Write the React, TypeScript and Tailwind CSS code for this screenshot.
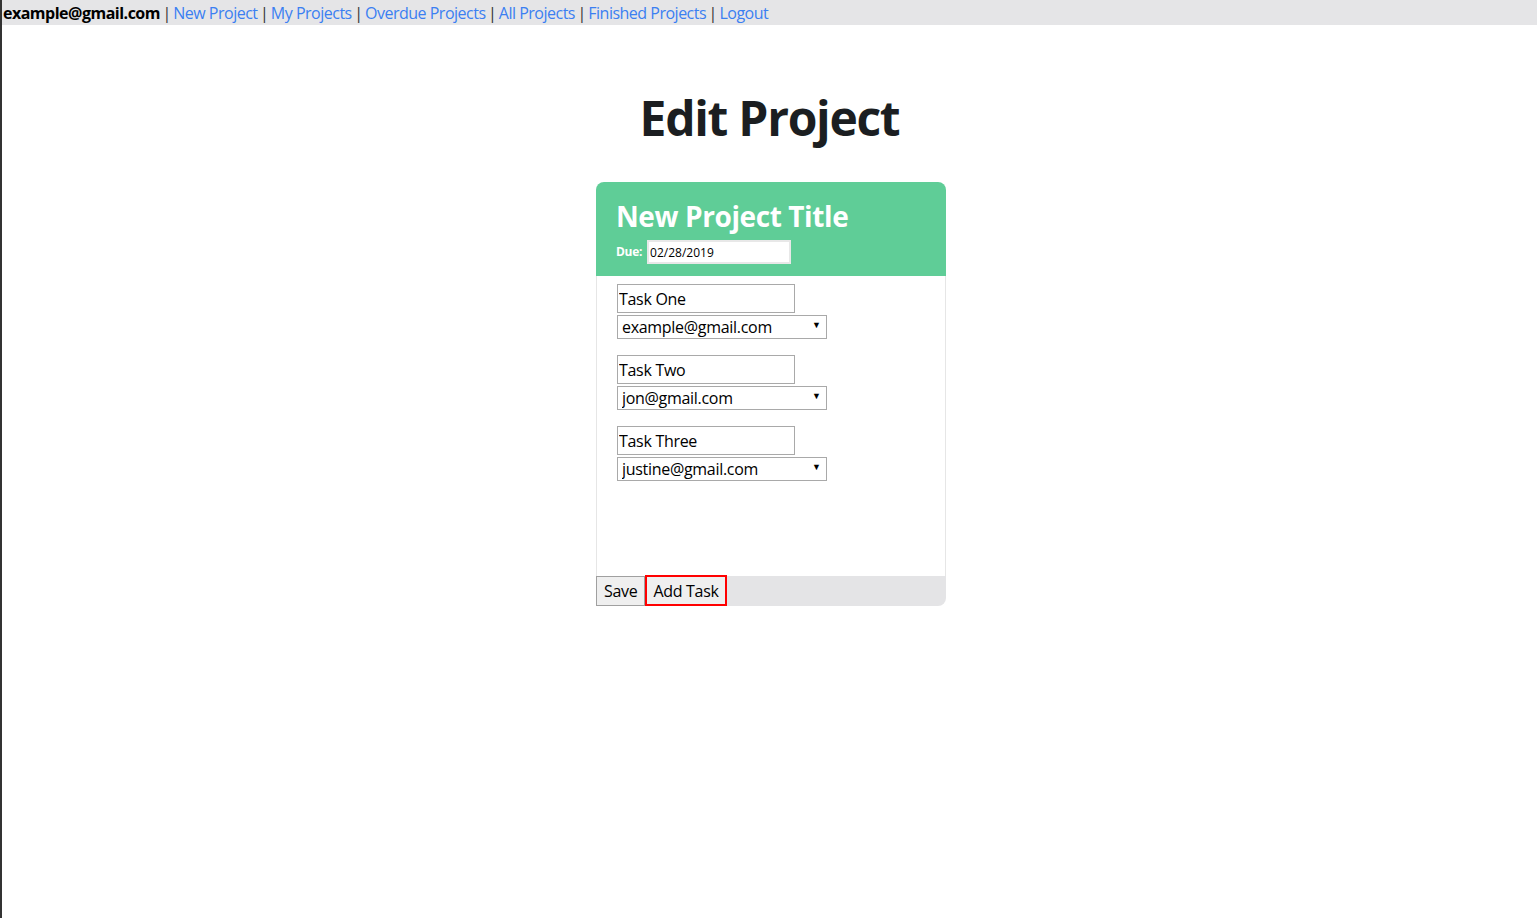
import { useState } from "react";

const links = ["New Project", "My Projects", "Overdue Projects", "All Projects", "Finished Projects", "Logout"];

const tasks = [
  { name: "Task One", user: "example@gmail.com" },
  { name: "Task Two", user: "jon@gmail.com" },
  { name: "Task Three", user: "justine@gmail.com" },
];

const users = ["example@gmail.com", "jon@gmail.com", "justine@gmail.com"];

function TaskRow({ name, user }: { name: string; user: string }) {
  const [value, setValue] = useState(user);
  return (
    <div className="flex flex-col gap-[2px]">
      <input
        defaultValue={name}
        className="w-[178px] h-[29px] border border-[#a9a9a9] px-[1px] text-[16px] tracking-[-0.3px] text-black outline-none"
      />
      <div className="relative w-[210px] h-[24px]">
        <select
          value={value}
          onChange={(e) => setValue(e.target.value)}
          className="appearance-none w-full h-full border border-[#a9a9a9] bg-white pl-[4px] text-[16px] tracking-[-0.3px] leading-[20px] text-black outline-none"
        >
          {users.map((u) => (
            <option key={u}>{u}</option>
          ))}
        </select>
        <span className="pointer-events-none absolute right-[6px] top-[3px] text-[9px] text-black">▼</span>
      </div>
    </div>
  );
}

export default function App() {
  return (
    <div className="min-h-[918px] border-l-2 border-[#333] bg-white font-['Open_Sans',sans-serif] text-[#212529]">
      <nav className="bg-[#e5e5e7] h-[25px] flex items-center text-[16px] leading-none pl-[1px]">
        <span className="font-bold text-black tracking-[-0.5px]">example@gmail.com</span>
        {links.map((l) => (
          <span key={l} className="tracking-[-0.5px]">
            <span className="text-[#333] mx-[2.5px]">|</span>
            <a href="#" className="text-[#3b7ff2]">{l}</a>
          </span>
        ))}
      </nav>

      <h1 className="text-center text-[48px] font-bold text-[#1b1e21] mt-[63px] leading-[60px] tracking-[-1.3px]">Edit Project</h1>

      <div className="mt-[34px] w-[350px] ml-[594px]">
        <div className="bg-[#5fcd97] rounded-t-[8px] h-[94px] px-[20px] pt-[16px]">
          <h2 className="text-white font-bold text-[28px] leading-[36px] tracking-[-0.4px]">New Project Title</h2>
          <div className="flex items-center gap-[5px] mt-[6px]">
            <span className="text-white font-bold text-[12px] tracking-[-0.3px]">Due:</span>
            <input
              defaultValue="02/28/2019"
              className="w-[144px] h-[24px] border-2 border-[#e8e8e8] bg-white px-[1px] text-[12px] text-black outline-none"
            />
          </div>
        </div>
        <div className="border-x border-[#e6e6e6] h-[300px] pl-[20px] pt-[8px] flex flex-col gap-[16px]">
          {tasks.map((t) => (
            <TaskRow key={t.name} name={t.name} user={t.user} />
          ))}
        </div>
        <div className="bg-[#e4e4e6] rounded-b-[8px] h-[30px] flex">
          <button className="h-[30px] px-[7px] bg-[#efefef] border border-[#a0a0a0] text-[16px] tracking-[-0.3px] text-black">Save</button>
          <button className="h-[31px] -mt-[1px] px-[6px] bg-[#efefef] border-2 border-[#ff0000] text-[16px] tracking-[-0.3px] text-black">Add Task</button>
        </div>
      </div>
    </div>
  );
}
